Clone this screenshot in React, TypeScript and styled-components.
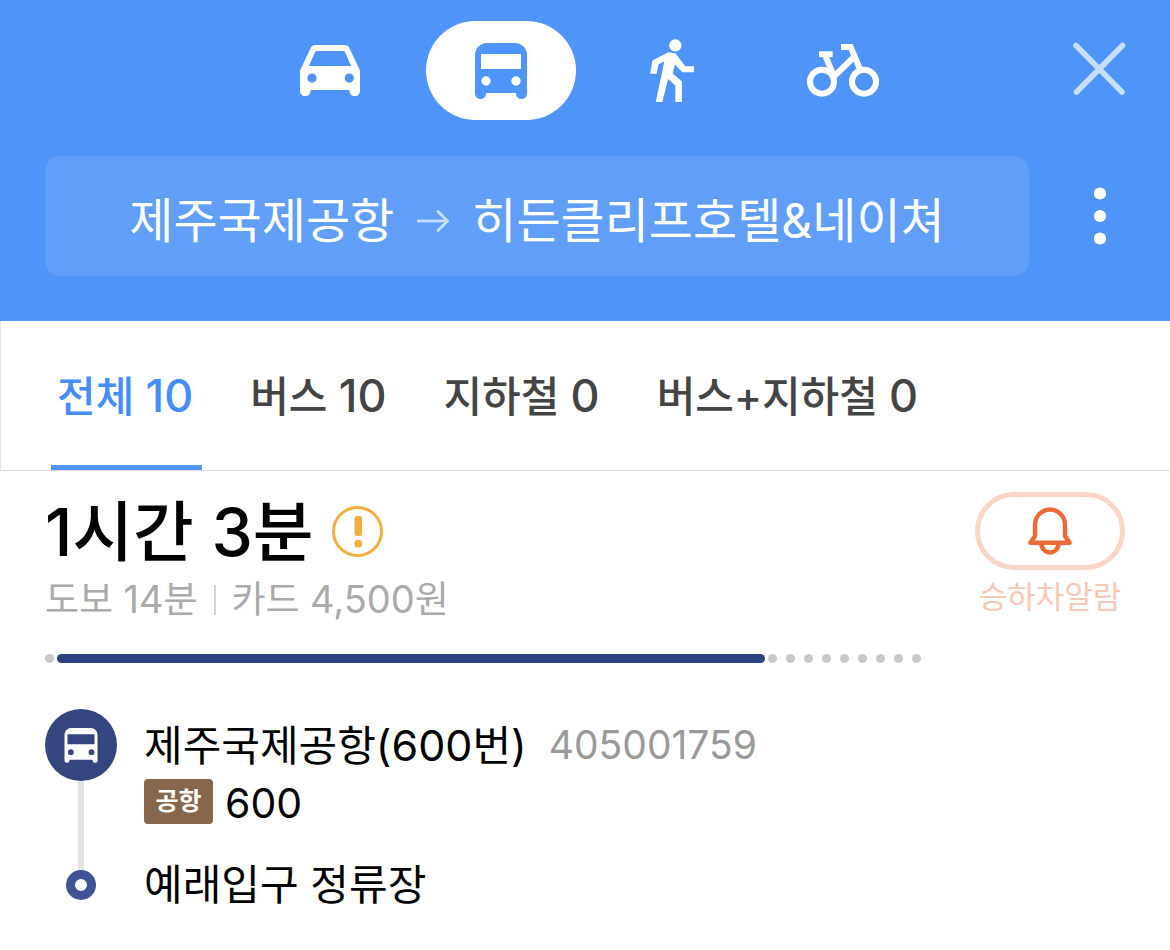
import React, { useState } from "react";
import styled, { createGlobalStyle } from "styled-components";

const GlobalStyle = createGlobalStyle`
  *, *::before, *::after { box-sizing: border-box; }
  body {
    margin: 0;
    background: #fff;
    color: #000;
    font-family: Inter, "Noto Sans CJK KR", sans-serif;
  }
  button { padding: 0; border: 0; background: none; color: inherit; font: inherit; cursor: pointer; }
  svg { display: block; }
  h1, p, ol { margin: 0; padding: 0; list-style: none; }
`;

const Header = styled.header`
  padding: 21px 0 45px;
  background: #4f94f8;
  color: #fff;
`;

const ModeBar = styled.div`
  display: grid;
  grid-template-columns: 1fr auto 1fr;
  align-items: center;
  padding: 0 44px 0 47px;
`;

const Modes = styled.nav`
  grid-column: 2;
  display: flex;
  gap: 21px;
`;

const ModeButton = styled.button<{ $active: boolean }>`
  display: flex;
  align-items: center;
  justify-content: center;
  width: 150px;
  height: 99px;
  border-radius: 50px;
  background: ${(p) => (p.$active ? "#fff" : "transparent")};
  color: ${(p) => (p.$active ? "#4f94f8" : "#fff")};
`;

const CloseButton = styled.button`
  justify-self: end;
  padding-bottom: 4px;
  color: #c8defd;
`;

const RouteBar = styled.div`
  display: flex;
  align-items: center;
  margin-top: 36px;
  padding-left: 45px;
`;

const RouteBox = styled.button`
  flex: 1;
  display: flex;
  align-items: center;
  justify-content: center;
  gap: 23px;
  height: 120px;
  padding-top: 9px;
  border-radius: 15px;
  background: #619ef8;
  font-size: 48px;
  line-height: 72px;
  white-space: nowrap;
`;

const MoreButton = styled.button`
  display: flex;
  justify-content: center;
  width: 141px;
`;

const Tabs = styled.div`
  display: flex;
  gap: 42px;
  height: 150px;
  padding-left: 50px;
  border-left: 1px solid #e6e6e6;
  border-bottom: 1px solid #dcdcdc;
`;

const Tab = styled.button<{ $active: boolean }>`
  padding: 0 9px 0 6px;
  border-bottom: 5px solid ${(p) => (p.$active ? "#4f94f8" : "transparent")};
  color: ${(p) => (p.$active ? "#448dfa" : "#444")};
  font-size: 42px;
  font-weight: 500;
  white-space: nowrap;
`;

const Digits = styled.span<{ $size: number }>`
  font-size: ${(p) => p.$size}px;
`;

const Route = styled.main`
  padding: 21px 45px 40px;
`;

const Summary = styled.section`
  display: flex;
  gap: 54px;
`;

const SummaryText = styled.div`
  flex: 1;
`;

const Duration = styled.div`
  display: flex;
  align-items: center;
  gap: 18px;
  height: 79px;
`;

const Time = styled.h1`
  font-size: 66px;
  font-weight: 500;
  line-height: 80px;
`;

const Details = styled.p`
  display: flex;
  align-items: center;
  height: 57px;
  color: #aaa;
  font-size: 37px;
  line-height: 54px;
`;

const Divider = styled.span`
  width: 2px;
  height: 30px;
  margin: 0 16px;
  background: #d4d4d4;
`;

const Progress = styled.div`
  display: flex;
  gap: 9px;
  margin-top: 26px;
`;

const WalkDot = styled.span`
  width: 9px;
  height: 9px;
  border-radius: 50%;
  background: #c8c8c8;
`;

const RideBar = styled.span`
  flex: 1;
  height: 9px;
  margin: 0 -6px;
  border-radius: 5px;
  background: #2c437f;
`;

const Alarm = styled.button`
  display: flex;
  flex-direction: column;
  align-items: center;
  align-self: flex-start;
  width: 150px;
  color: #f6c8b7;
  font-size: 31px;
  line-height: 54px;
  white-space: nowrap;
`;

const AlarmPill = styled.span`
  display: flex;
  align-items: center;
  justify-content: center;
  width: 150px;
  height: 78px;
  border: 5px solid #f9d5c8;
  border-radius: 39px;
`;

const Stops = styled.ol`
  margin-top: 46px;
`;

const Stop = styled.li`
  display: flex;
  gap: 27px;
`;

const Marker = styled.div`
  display: flex;
  flex-direction: column;
  align-items: center;
  width: 72px;
`;

const BusMarker = styled.span`
  display: flex;
  align-items: center;
  justify-content: center;
  width: 72px;
  height: 72px;
  border-radius: 50%;
  background: #34457f;
  color: #fff;
`;

const Track = styled.span`
  flex: 1;
  width: 6px;
  background: #e4e4e4;
`;

const EndMarker = styled.span`
  width: 30px;
  height: 30px;
  border: 9px solid #405296;
  border-radius: 50%;
`;

const StopInfo = styled.div`
  padding: 2px 0 46px;
`;

const StopHeading = styled.div`
  display: flex;
  align-items: center;
  gap: 22px;
  height: 68px;
`;

const StopName = styled.p<{ $compact?: boolean }>`
  font-size: 42px;
  line-height: ${(p) => (p.$compact ? "30px" : "68px")};
  white-space: nowrap;
`;

const StopId = styled.span`
  color: #999;
  font-size: 39px;
  line-height: 68px;
`;

const Line = styled.p`
  display: flex;
  gap: 12px;
  height: 45px;
  font-size: 41px;
  line-height: 49px;
`;

const LineType = styled.span`
  width: 69px;
  height: 45px;
  border-radius: 4px;
  background: #86664c;
  color: #fff;
  font-size: 25px;
  font-weight: 700;
  line-height: 44px;
  text-align: center;
`;

const CarIcon = () => (
  <svg width="60" height="51" viewBox="0 0 60 51" fill="currentColor" fillRule="evenodd" aria-hidden="true">
    <path d="M15.5 0h29q3.500 0 5 3.200L60 25.500V46a5.250 5.250 0 0 1-10.500 0V45h-39v1A5.250 5.250 0 0 1 0 46V25.500L10.500 3.200Q12 0 15.500 0ZM17 6q-1.500 0-2.100 1.300L9 21h42L45.100 7.300Q44.500 6 43 6ZM12 28.500a4.600 4.600 0 1 0 0 9.200 4.600 4.600 0 0 0 0-9.200ZM49.300 28.500a4.600 4.600 0 1 0 0 9.200 4.600 4.600 0 0 0 0-9.200Z" />
  </svg>
);

const BusIcon = () => (
  <svg width="52" height="56" viewBox="0 0 52 56" fill="currentColor" fillRule="evenodd" aria-hidden="true">
    <path d="M12 0h28a12 12 0 0 1 12 12v38.500a5.500 5.500 0 0 1-11 0V50H11v.5a5.500 5.500 0 0 1-11 0V12A12 12 0 0 1 12 0ZM6 11v15h40V11ZM11 33.300a4.700 4.700 0 1 0 0 9.400 4.700 4.700 0 0 0 0-9.400ZM41 33.300a4.700 4.700 0 1 0 0 9.400 4.700 4.700 0 0 0 0-9.400Z" />
  </svg>
);

const StopBusIcon = () => (
  <svg width="34" height="35" viewBox="0 0 34 35" fill="currentColor" fillRule="evenodd" aria-hidden="true">
    <path d="M7 0h20a6.500 6.500 0 0 1 6.500 6.500V32a2.400 2.400 0 0 1-5 .5V31.700H5.500v.8a2.400 2.400 0 0 1-5-.5V6.500A6.500 6.500 0 0 1 7 0ZM3.500 6.300v10h27v-10ZM6.800 21.300a2.900 2.900 0 1 0 0 5.800 2.900 2.900 0 0 0 0-5.800ZM27.500 21.300a2.900 2.900 0 1 0 0 5.800 2.900 2.900 0 0 0 0-5.800Z" />
  </svg>
);

const WalkIcon = () => (
  <svg width="44" height="63" viewBox="0 0 132 190" fill="currentColor" aria-hidden="true">
    <circle cx="76" cy="19" r="18.500" />
    <path d="M55 40 77 44 106 82H132V100H97L75 77 68 104 96 128V190H76V140L54 121 37 190H17L43 67 25 77 20 105H0L7 65Z" />
  </svg>
);

const BikeIcon = () => (
  <svg width="72" height="53" viewBox="0 0 216 159" fill="none" stroke="currentColor" strokeWidth="18" aria-hidden="true">
    <circle cx="45" cy="113" r="36" />
    <circle cx="171" cy="113" r="36" />
    <path d="M36 31H77M102 9H131L160 78M56 38 80 95M76 102 141 39" />
  </svg>
);

const CloseIcon = () => (
  <svg width="54" height="54" viewBox="0 0 54 54" stroke="currentColor" strokeWidth="5.500" strokeLinecap="round" aria-hidden="true">
    <path d="M4 3.500 50 50M50.500 3.500 4.500 50" />
  </svg>
);

const MoreIcon = () => (
  <svg width="12" height="58" viewBox="0 0 12 58" fill="currentColor" aria-hidden="true">
    <circle cx="6" cy="6.500" r="6.100" />
    <circle cx="6" cy="29" r="6.100" />
    <circle cx="6" cy="51.500" r="6.100" />
  </svg>
);

const ArrowIcon = () => (
  <svg width="32" height="22" viewBox="0 0 32 22" fill="none" stroke="#c8defd" strokeWidth="2.800" aria-hidden="true">
    <path d="M0 11H30" />
    <path d="M21 1.500 30.500 11 21 20.500" strokeLinecap="round" strokeLinejoin="round" />
  </svg>
);

const AlertIcon = () => (
  <svg width="51" height="51" viewBox="0 0 51 51" fill="#f3ae3d" role="img" aria-label="안내">
    <circle cx="25.500" cy="25.500" r="24" fill="none" stroke="#f3ae3d" strokeWidth="3" />
    <rect x="22.500" y="10" width="7.500" height="20" rx="2.500" />
    <rect x="22.500" y="34" width="7.500" height="7.500" rx="3" />
  </svg>
);

const BellIcon = () => (
  <svg width="44" height="48" viewBox="0 0 44 48" fill="none" stroke="#ec6a37" strokeWidth="4.400" strokeLinejoin="round" aria-hidden="true">
    <path d="M7 29V18a15 15.500 0 0 1 30 0V29L41.600 35.800H2.400Z" />
    <path d="M13.500 37a8.500 8.500 0 0 0 17 0" />
  </svg>
);

const modes = [
  { label: "자동차", Icon: CarIcon },
  { label: "대중교통", Icon: BusIcon },
  { label: "도보", Icon: WalkIcon },
  { label: "자전거", Icon: BikeIcon },
];

const tabs = [
  { label: "전체", count: 10 },
  { label: "버스", count: 10 },
  { label: "지하철", count: 0 },
  { label: "버스+지하철", count: 0 },
];

export default function App() {
  const [mode, setMode] = useState(1);
  const [tab, setTab] = useState(0);

  return (
    <>
      <GlobalStyle />
      <Header>
        <ModeBar>
          <Modes>
            {modes.map(({ label, Icon }, i) => (
              <ModeButton key={label} aria-label={label} aria-pressed={i === mode} $active={i === mode} onClick={() => setMode(i)}>
                <Icon />
              </ModeButton>
            ))}
          </Modes>
          <CloseButton aria-label="닫기">
            <CloseIcon />
          </CloseButton>
        </ModeBar>
        <RouteBar>
          <RouteBox>
            <span>제주국제공항</span>
            <ArrowIcon />
            <span>히든클리프호텔&amp;네이쳐</span>
          </RouteBox>
          <MoreButton aria-label="더보기">
            <MoreIcon />
          </MoreButton>
        </RouteBar>
      </Header>

      <Tabs role="tablist">
        {tabs.map(({ label, count }, i) => (
          <Tab key={label} role="tab" aria-selected={i === tab} $active={i === tab} onClick={() => setTab(i)}>
            {label} <Digits $size={45}>{count}</Digits>
          </Tab>
        ))}
      </Tabs>

      <Route>
        <Summary>
          <SummaryText>
            <Duration>
              <Time>1시간 3분</Time>
              <AlertIcon />
            </Duration>
            <Details>
              <span>
                도보 <Digits $size={38}>14</Digits>분
              </span>
              <Divider />
              <span>
                카드 <Digits $size={38}>4,500</Digits>원
              </span>
            </Details>
            <Progress>
              <WalkDot />
              <RideBar />
              {Array.from({ length: 9 }, (_, i) => (
                <WalkDot key={i} />
              ))}
            </Progress>
          </SummaryText>
          <Alarm>
            <AlarmPill>
              <BellIcon />
            </AlarmPill>
            <span>승하차알람</span>
          </Alarm>
        </Summary>

        <Stops>
          <Stop>
            <Marker>
              <BusMarker>
                <StopBusIcon />
              </BusMarker>
              <Track />
            </Marker>
            <StopInfo>
              <StopHeading>
                <StopName>
                  제주국제공항<Digits $size={43}>(600</Digits>번<Digits $size={43}>)</Digits>
                </StopName>
                <StopId>405001759</StopId>
              </StopHeading>
              <Line>
                <LineType>공항</LineType>
                <span>600</span>
              </Line>
            </StopInfo>
          </Stop>
          <Stop>
            <Marker>
              <EndMarker />
            </Marker>
            <StopName $compact>예래입구 정류장</StopName>
          </Stop>
        </Stops>
      </Route>
    </>
  );
}
